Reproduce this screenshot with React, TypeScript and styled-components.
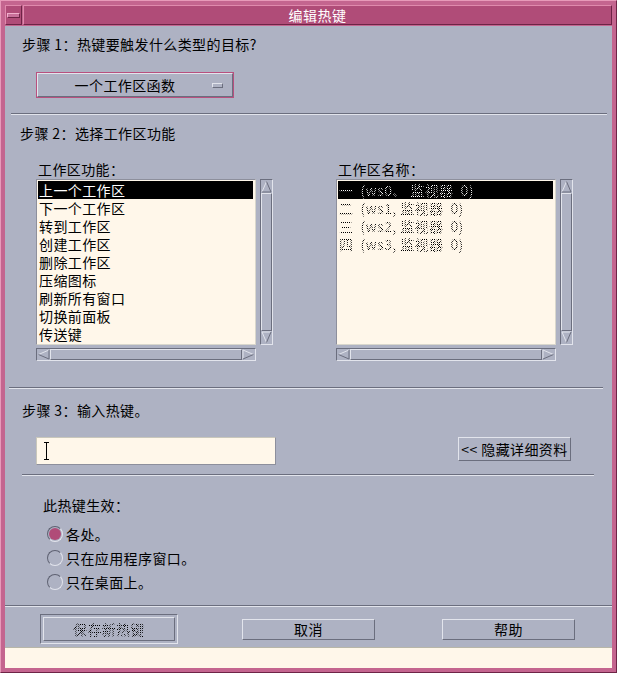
import React from 'react';
import styled, {createGlobalStyle, css} from 'styled-components';

const GlobalStyle = createGlobalStyle`
    html, body {
        margin: 0;
        padding: 0;
        background: #aeb2c3;
    }
    body {
        font-family: "Noto Sans CJK SC", "Noto Sans", sans-serif;
        font-size: 14px;
        color: #000;
    }
`;

const BG = '#aeb2c3';
const DARK = '#6b6e7e';
const LIGHT = '#e2e4ec';
const CREAM = '#fff7ea';

const stipple = (ink: string) => css`
    color: transparent;
    background-image: repeating-conic-gradient(${ink} 0 25%, transparent 0 50%);
    background-size: 2px 2px;
    -webkit-background-clip: text;
    background-clip: text;
`;

const raised = css`
    border: 1px solid;
    border-color: ${LIGHT} ${DARK} ${DARK} ${LIGHT};
`;

const sunken = css`
    border: 1px solid;
    border-color: ${DARK} ${LIGHT} ${LIGHT} ${DARK};
`;

const Window = styled.div`
    width: 617px;
    height: 673px;
    box-sizing: border-box;
    background: #c4658f;
    border: 1px solid;
    border-color: #e79ab9 #6e2446 #6e2446 #e79ab9;
    padding: 4px;
    display: flex;
    flex-direction: column;
`;

const TitleRow = styled.div`
    height: 20px;
    display: flex;
    gap: 1px;
    margin-bottom: 1px;
`;

const MenuButton = styled.div`
    width: 17px;
    box-sizing: border-box;
    background: #b04c78;
    border: 1px solid;
    border-color: #e08aad #6e2446 #6e2446 #e08aad;
    display: flex;
    align-items: center;
    justify-content: center;
    span {
        width: 11px;
        height: 3px;
        background: #c8709a;
        border: 1px solid;
        border-color: #f0b0cc #6e2446 #6e2446 #f0b0cc;
    }
`;

const TitleBar = styled.div`
    flex: 1;
    box-sizing: border-box;
    background: #b04c78;
    border: 1px solid;
    border-color: #e08aad #6e2446 #6e2446 #e08aad;
    color: #fff;
    text-align: center;
    line-height: 18px;
    letter-spacing: 0.5px;
`;

const Body = styled.div`
    flex: 1;
    background: ${BG};
    display: flex;
    flex-direction: column;
    letter-spacing: 0.4px;
`;

const Message = styled.div`
    height: 20px;
    background: ${CREAM};
    border-top: 1px solid #b8b6a8;
`;

const Label = styled.div<{$top: number; $left: number}>`
    margin: ${p => p.$top}px 0 0 ${p => p.$left}px;
    line-height: 18px;
    height: 18px;
    white-space: pre;
`;

const Separator = styled.div<{$top: number; $left?: number; $right?: number}>`
    margin: ${p => p.$top}px ${p => p.$right ?? 0}px 0 ${p => p.$left ?? 0}px;
    height: 0;
    border-top: 1px solid ${DARK};
    border-bottom: 1px solid ${LIGHT};
`;

const OptionMenu = styled.div`
    margin: 19px 0 0 31px;
    width: 198px;
    height: 26px;
    box-sizing: border-box;
    border: 1px solid #b8507e;
    display: flex;
`;

const OptionFace = styled.div`
    flex: 1;
    ${raised};
    display: flex;
    align-items: center;
    padding: 0 9px 0 0;
    span {
        flex: 1;
        text-align: center;
        line-height: 18px;
    }
    i {
        width: 9px;
        height: 3px;
        ${raised};
    }
`;

const Columns = styled.div`
    margin: 18px 0 0 31px;
    display: flex;
    gap: 63px;
`;

const Column = styled.div`
    display: flex;
    flex-direction: column;
`;

const ListRow = styled.div`
    margin-top: 1px;
    display: flex;
    gap: 4px;
`;

const ListBox = styled.div`
    width: 220px;
    height: 166px;
    box-sizing: border-box;
    background: ${CREAM};
    border: 1px solid;
    border-color: #8d8f9c #d9d7cc #d9d7cc #8d8f9c;
    padding: 1px;
    overflow: hidden;
`;

const ListItem = styled.div<{$selected?: boolean; $disabled?: boolean}>`
    height: 18px;
    width: 214px;
    padding-left: 1px;
    white-space: pre;
    overflow: hidden;
    background: ${p => (p.$selected ? '#000' : 'transparent')};
    color: ${p => (p.$selected ? '#fff' : '#000')};
    span {
        display: block;
        height: 18px;
        line-height: 18px;
        ${p => p.$disabled && stipple(p.$selected ? '#fff' : '#000')};
    }
`;

const VScroll = styled.div`
    width: 13px;
    height: 166px;
    box-sizing: border-box;
    ${sunken};
    display: flex;
    flex-direction: column;
`;

const HScroll = styled.div`
    margin-top: 3px;
    width: 220px;
    height: 13px;
    box-sizing: border-box;
    ${sunken};
    display: flex;
`;

const Thumb = styled.div`
    flex: 1;
    ${raised};
`;

const Arrow = styled.svg`
    flex: none;
    display: block;
`;

const UpArrow = () => (
    <Arrow width="11" height="13" viewBox="0 0 11 13">
        <polyline points="1,12 5.5,1.5" stroke={LIGHT} fill="none" />
        <polyline points="5.5,1.5 10,12 1,12" stroke={DARK} fill="none" />
    </Arrow>
);

const DownArrow = () => (
    <Arrow width="11" height="13" viewBox="0 0 11 13">
        <polyline points="10,1 1,1 5.5,11.5" stroke={LIGHT} fill="none" />
        <polyline points="5.5,11.5 10,1" stroke={DARK} fill="none" />
    </Arrow>
);

const LeftArrow = () => (
    <Arrow width="13" height="11" viewBox="0 0 13 11">
        <polyline points="12,1 1.5,5.5" stroke={LIGHT} fill="none" />
        <polyline points="1.5,5.5 12,10 12,1" stroke={DARK} fill="none" />
    </Arrow>
);

const RightArrow = () => (
    <Arrow width="13" height="11" viewBox="0 0 13 11">
        <polyline points="1,10 1,1 11.5,5.5" stroke={LIGHT} fill="none" />
        <polyline points="11.5,5.5 1,10" stroke={DARK} fill="none" />
    </Arrow>
);

const KeyRow = styled.div`
    margin: 18px 41px 0 31px;
    display: flex;
    align-items: flex-start;
    justify-content: space-between;
`;

const KeyInput = styled.div`
    width: 240px;
    height: 28px;
    box-sizing: border-box;
    background: ${CREAM};
    border: 1px solid;
    border-color: #c9c7bb #8d8f9c #8d8f9c #c9c7bb;
    display: flex;
    align-items: center;
    padding-left: 6px;
`;

const Button = styled.div<{$width: number; $disabled?: boolean}>`
    width: ${p => p.$width}px;
    height: 21px;
    box-sizing: border-box;
    ${raised};
    display: flex;
    align-items: center;
    justify-content: center;
    white-space: pre;
    line-height: 18px;
    span {
        ${p => p.$disabled && stipple('#000')};
    }
`;

const DetailButton = styled(Button)`
    height: 24px;
`;

const DefaultFrame = styled.div`
    width: 138px;
    height: 30px;
    box-sizing: border-box;
    ${sunken};
    padding: 2px;
    display: flex;
    ${Button} {
        flex: 1;
        height: auto;
    }
`;

const RadioGroup = styled.div`
    margin: 8px 0 0 42px;
    display: flex;
    flex-direction: column;
`;

const RadioRow = styled.div`
    height: 24px;
    display: flex;
    align-items: center;
    gap: 3px;
    span {
        line-height: 18px;
    }
`;

const RadioCircle = styled.div<{$on?: boolean}>`
    width: 16px;
    height: 16px;
    box-sizing: border-box;
    border-radius: 50%;
    border: 1px solid;
    border-color: #5f6272 ${LIGHT} ${LIGHT} #5f6272;
    display: flex;
    align-items: center;
    justify-content: center;
    &::after {
        content: '';
        width: 12px;
        height: 12px;
        border-radius: 50%;
        background: ${p => (p.$on ? '#b04c78' : 'transparent')};
    }
`;

const ButtonRow = styled.div`
    margin: 7px 0 0 35px;
    display: flex;
    align-items: center;
`;

const Spacer = styled.div<{$w: number}>`
    width: ${p => p.$w}px;
`;

const IBeam = () => (
    <svg width="7" height="18" viewBox="0 0 7 18" style={{display: 'block'}}>
        <path d="M1 0.5H6M3.5 0.5V17.5M1 17.5H6" stroke="#000" fill="none" />
    </svg>
);

const functions = ['上一个工作区', '下一个工作区', '转到工作区', '创建工作区', '删除工作区', '压缩图标', '刷新所有窗口', '切换前面板', '传送键'];
const workspaces = ['一  (ws0、 监视器  0)', '二  (ws1, 监视器  0)', '三  (ws2, 监视器  0)', '四  (ws3, 监视器  0)'];
const scopes = ['各处。', '只在应用程序窗口。', '只在桌面上。'];

const ScrollList: React.FC<{label: string; items: string[]; disabled?: boolean}> = ({label, items, disabled}) => (
    <Column>
        <Label $top={0} $left={2}>{label}</Label>
        <ListRow>
            <ListBox>
                {items.map((item, i) => (
                    <ListItem key={item} $selected={i === 0} $disabled={disabled}>
                        <span>{item}</span>
                    </ListItem>
                ))}
            </ListBox>
            <VScroll>
                <UpArrow />
                <Thumb />
                <DownArrow />
            </VScroll>
        </ListRow>
        <HScroll>
            <LeftArrow />
            <Thumb />
            <RightArrow />
        </HScroll>
    </Column>
);

export default function App() {
    return (
        <>
            <GlobalStyle />
            <Window>
                <TitleRow>
                    <MenuButton><span /></MenuButton>
                    <TitleBar>编辑热键</TitleBar>
                </TitleRow>
                <Body>
                    <Label $top={9} $left={17}>步骤 1：热键要触发什么类型的目标?</Label>
                    <OptionMenu>
                        <OptionFace>
                            <span>一个工作区函数</span>
                            <i />
                        </OptionFace>
                    </OptionMenu>
                    <Separator $top={15} $left={6} $right={5} />
                    <Label $top={9} $left={15}>步骤 2：选择工作区功能</Label>
                    <Columns>
                        <ScrollList label="工作区功能：" items={functions} />
                        <ScrollList label="工作区名称：" items={workspaces} disabled />
                    </Columns>
                    <Separator $top={26} $left={4} $right={9} />
                    <Label $top={12} $left={17}>步骤 3：输入热键。</Label>
                    <KeyRow>
                        <KeyInput><IBeam /></KeyInput>
                        <DetailButton $width={113}>{'<< 隐藏详细资料'}</DetailButton>
                    </KeyRow>
                    <Separator $top={9} $left={17} $right={18} />
                    <Label $top={20} $left={38}>此热键生效：</Label>
                    <RadioGroup>
                        {scopes.map((s, i) => (
                            <RadioRow key={s}>
                                <RadioCircle $on={i === 0} />
                                <span>{s}</span>
                            </RadioRow>
                        ))}
                    </RadioGroup>
                    <Separator $top={11} />
                    <ButtonRow>
                        <DefaultFrame>
                            <Button $width={130} $disabled><span>保存新热键</span></Button>
                        </DefaultFrame>
                        <Spacer $w={64} />
                        <Button $width={133}>取消</Button>
                        <Spacer $w={67} />
                        <Button $width={133}>帮助</Button>
                    </ButtonRow>
                </Body>
                <Message />
            </Window>
        </>
    );
}
